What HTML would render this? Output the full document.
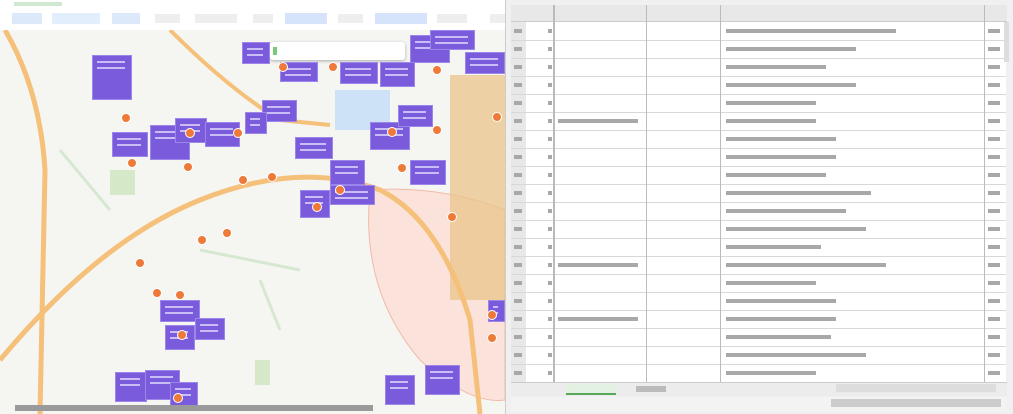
<!DOCTYPE html>
<html><head><meta charset="utf-8"><style>
*{margin:0;padding:0;box-sizing:border-box}
body{width:1013px;height:414px;overflow:hidden;position:relative;background:#fff;font-family:"Liberation Sans","Noto Sans CJK SC",sans-serif;font-size:9px}
.a{position:absolute}
.p{position:absolute;background:#7a5bdc;border:1px solid #9c86ea}
.p::after{content:"";position:absolute;left:4px;top:5px;right:6px;height:2px;background:#c9bdf5;box-shadow:0 6px 0 #c9bdf5}
.m{position:absolute;width:10px;height:10px;border-radius:50%;background:#ee7a3a;border:1px solid #fff}
.r{position:absolute;left:0;right:0;height:1px;background:#d8d8d8}
.t{position:absolute;height:4px;background:#a8a8a8}
</style></head><body>
<div class="a" style="left:0;top:0;width:505px;height:414px;background:#f5f5f2;overflow:hidden">
 <div class="a" style="left:0;top:0;width:505px;height:30px;background:#fff"></div>
 <div class="a" style="left:14px;top:2px;width:48px;height:4px;background:#cfe9d0"></div>
 <div class="a" style="left:12px;top:13px;width:30px;height:11px;background:#dbe9fb"></div>
 <div class="a" style="left:52px;top:13px;width:48px;height:11px;background:#e3eefc"></div>
 <div class="a" style="left:112px;top:13px;width:28px;height:11px;background:#dbe9fb"></div>
 <div class="a" style="left:155px;top:14px;width:25px;height:9px;background:#eee"></div>
 <div class="a" style="left:195px;top:14px;width:42px;height:9px;background:#eee"></div>
 <div class="a" style="left:253px;top:14px;width:20px;height:9px;background:#eee"></div>
 <div class="a" style="left:285px;top:13px;width:42px;height:11px;background:#d5e4fa"></div>
 <div class="a" style="left:338px;top:14px;width:25px;height:9px;background:#eee"></div>
 <div class="a" style="left:375px;top:13px;width:52px;height:11px;background:#d5e4fa"></div>
 <div class="a" style="left:437px;top:14px;width:30px;height:9px;background:#eee"></div>
 <div class="a" style="left:490px;top:14px;width:15px;height:9px;background:#eee"></div>
 <svg class="a" style="left:0;top:30px" width="505" height="384">
  <path d="M370 160 Q360 260 420 330 Q470 375 505 370 L505 180 Q440 155 370 160Z" fill="#fbe3dc" stroke="#f2b9a8"/>
  <rect x="450" y="45" width="55" height="225" fill="#e9c48a" opacity=".75"/>
  <rect x="335" y="60" width="55" height="40" fill="#cde2f7"/>
  <path d="M5 0 Q40 60 45 140 L40 384" stroke="#f5c079" stroke-width="5" fill="none"/>
  <path d="M0 330 Q100 210 200 170 Q300 130 380 160 Q440 190 470 290 L480 384" stroke="#f5c079" stroke-width="5" fill="none"/>
  <path d="M170 0 Q230 60 280 90 L330 95" stroke="#f5c079" stroke-width="4" fill="none"/>
  <path d="M60 120 L110 180 M200 220 L300 240 M260 250 L280 300" stroke="#d7e8d2" stroke-width="3" fill="none"/>
  <rect x="110" y="140" width="25" height="25" fill="#d5e9c9"/>
  <rect x="255" y="330" width="15" height="25" fill="#d5e9c9"/>
 </svg>
 <div class="a" style="left:270px;top:42px;width:135px;height:18px;background:#fff;border-radius:3px;box-shadow:0 1px 3px #aaa"></div>
 <div class="a" style="left:273px;top:47px;width:4px;height:8px;background:#7ac97c"></div>
 <div class="p" style="left:92px;top:55px;width:40px;height:45px"></div>
 <div class="p" style="left:242px;top:42px;width:28px;height:22px"></div>
 <div class="p" style="left:280px;top:62px;width:38px;height:20px"></div>
 <div class="p" style="left:340px;top:62px;width:38px;height:22px"></div>
 <div class="p" style="left:380px;top:62px;width:35px;height:25px"></div>
 <div class="p" style="left:410px;top:35px;width:40px;height:28px"></div>
 <div class="p" style="left:430px;top:30px;width:45px;height:20px"></div>
 <div class="p" style="left:465px;top:52px;width:40px;height:22px"></div>
 <div class="p" style="left:262px;top:100px;width:35px;height:22px"></div>
 <div class="p" style="left:112px;top:132px;width:36px;height:25px"></div>
 <div class="p" style="left:150px;top:125px;width:40px;height:35px"></div>
 <div class="p" style="left:175px;top:118px;width:32px;height:25px"></div>
 <div class="p" style="left:205px;top:122px;width:35px;height:25px"></div>
 <div class="p" style="left:245px;top:112px;width:22px;height:22px"></div>
 <div class="p" style="left:295px;top:137px;width:38px;height:22px"></div>
 <div class="p" style="left:370px;top:122px;width:40px;height:28px"></div>
 <div class="p" style="left:398px;top:105px;width:35px;height:22px"></div>
 <div class="p" style="left:410px;top:160px;width:36px;height:25px"></div>
 <div class="p" style="left:330px;top:160px;width:35px;height:25px"></div>
 <div class="p" style="left:300px;top:190px;width:30px;height:28px"></div>
 <div class="p" style="left:330px;top:185px;width:45px;height:20px"></div>
 <div class="p" style="left:160px;top:300px;width:40px;height:22px"></div>
 <div class="p" style="left:195px;top:318px;width:30px;height:22px"></div>
 <div class="p" style="left:165px;top:325px;width:30px;height:25px"></div>
 <div class="p" style="left:115px;top:372px;width:32px;height:30px"></div>
 <div class="p" style="left:145px;top:370px;width:35px;height:30px"></div>
 <div class="p" style="left:170px;top:382px;width:28px;height:25px"></div>
 <div class="p" style="left:385px;top:375px;width:30px;height:30px"></div>
 <div class="p" style="left:425px;top:365px;width:35px;height:30px"></div>
 <div class="p" style="left:488px;top:300px;width:17px;height:22px"></div>
 <div class="m" style="left:121px;top:113px"></div><div class="m" style="left:127px;top:158px"></div>
 <div class="m" style="left:183px;top:162px"></div><div class="m" style="left:238px;top:175px"></div>
 <div class="m" style="left:267px;top:172px"></div><div class="m" style="left:185px;top:128px"></div>
 <div class="m" style="left:233px;top:128px"></div><div class="m" style="left:278px;top:62px"></div>
 <div class="m" style="left:328px;top:62px"></div><div class="m" style="left:432px;top:65px"></div>
 <div class="m" style="left:492px;top:112px"></div><div class="m" style="left:387px;top:127px"></div>
 <div class="m" style="left:432px;top:125px"></div><div class="m" style="left:397px;top:163px"></div>
 <div class="m" style="left:335px;top:185px"></div><div class="m" style="left:312px;top:202px"></div>
 <div class="m" style="left:447px;top:212px"></div><div class="m" style="left:222px;top:228px"></div>
 <div class="m" style="left:197px;top:235px"></div><div class="m" style="left:135px;top:258px"></div>
 <div class="m" style="left:152px;top:288px"></div><div class="m" style="left:175px;top:290px"></div>
 <div class="m" style="left:177px;top:330px"></div><div class="m" style="left:487px;top:310px"></div>
 <div class="m" style="left:487px;top:333px"></div><div class="m" style="left:173px;top:393px"></div>
 <div class="a" style="left:15px;top:405px;width:358px;height:6px;background:#9a9a9a"></div>
</div>
<div class="a" style="left:505px;top:0;width:508px;height:414px;background:#f0f0f0;border-left:1px solid #ccc">
 <div class="a" style="left:5px;top:5px;width:496px;height:17px;background:#e8e8e8;border-bottom:1px solid #ccc"></div>
 <div class="a" style="left:20px;top:22px;width:480px;height:360px;background:#fff"></div>
 <div class="a" style="left:5px;top:22px;width:15px;height:360px;background:#e8e8e8"></div>
 <div id="rows"></div>
 <div class="a" style="left:47px;top:5px;width:2px;height:377px;background:#bbb"></div>
 <div class="a" style="left:140px;top:5px;width:1px;height:377px;background:#bbb"></div>
 <div class="a" style="left:214px;top:5px;width:1px;height:377px;background:#bbb"></div>
 <div class="a" style="left:478px;top:5px;width:1px;height:377px;background:#bbb"></div>
 <div class="a" style="left:498px;top:22px;width:5px;height:40px;background:#ddd"></div>
 <div class="a" style="left:5px;top:382px;width:496px;height:14px;background:#ececec;border-top:1px solid #ccc"></div>
 <div class="a" style="left:60px;top:384px;width:50px;height:11px;background:#e3f1e3;border-bottom:2px solid #5aa75a"></div>
 <div class="a" style="left:130px;top:386px;width:30px;height:6px;background:#bbb"></div>
 <div class="a" style="left:330px;top:384px;width:160px;height:8px;background:#ddd"></div>
 <div class="a" style="left:5px;top:397px;width:496px;height:14px;background:#f3f3f3"></div>
 <div class="a" style="left:325px;top:399px;width:170px;height:8px;background:#ccc"></div>
</div>
<script>
var h="",y=22,d=[170,130,100,130,90,90,110,110,100,145,120,140,95,160,90,110,110,105,140,90,120];
for(var i=0;i<20;i++){h+='<div class="r" style="top:'+(y+17.5)+'px;left:5px;right:7px"></div>';
h+='<div class="t" style="top:'+(y+7)+'px;left:220px;width:'+d[i]+'px"></div>';
h+='<div class="t" style="top:'+(y+7)+'px;left:8px;width:8px"></div>';
h+='<div class="t" style="top:'+(y+7)+'px;left:42px;width:4px"></div>';
h+='<div class="t" style="top:'+(y+7)+'px;left:482px;width:12px"></div>';
if(i==5||i==13||i==16)h+='<div class="t" style="top:'+(y+7)+'px;left:52px;width:80px"></div>';
y+=18;}
document.getElementById("rows").outerHTML=h;
</script>
</body></html>
